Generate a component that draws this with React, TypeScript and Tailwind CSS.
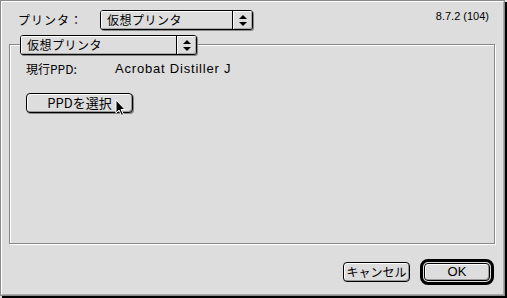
import React from "react";

const font = { fontFamily: '"Noto Sans CJK JP", "Liberation Sans", sans-serif' };

function Arrows() {
  return (
    <svg width="8" height="11" viewBox="0 0 8 11" className="block">
      <polygon points="4,0 8,4 0,4" fill="#000" />
      <polygon points="0,7 8,7 4,11" fill="#000" />
    </svg>
  );
}

function Popup({ w, label }: { w: string; label: string }) {
  return (
    <div
      className={`${w} h-[20px] flex bg-[#dddddd] border border-black rounded-[3px] shadow-[1px_1px_0_#888]`}
    >
      <div className="flex-1 flex items-center pl-[5px] border-t border-l border-white border-b border-b-[#aaa] rounded-l-[2px] text-[12px] leading-none text-black tracking-[0.5px]">
        {label}
      </div>
      <div className="w-[20px] flex items-center justify-center border-l border-black shadow-[inset_1px_1px_0_#fff,inset_-1px_-1px_0_#aaa] rounded-r-[2px]">
        <Arrows />
      </div>
    </div>
  );
}

function Cursor() {
  return (
    <svg width="12" height="18" viewBox="0 0 12 18" className="absolute left-[89px] top-[6px]">
      <path
        d="M1 1 L1 14 L4 11 L6.5 16.5 L8.5 15.5 L6 10.5 L10 10.5 Z"
        fill="#000"
        stroke="#fff"
        strokeWidth="1"
      />
    </svg>
  );
}

export default function App() {
  return (
    <div className="w-[507px] h-[298px] bg-[#dddddd]" style={font}>
      <div className="w-[505px] h-[296px] border border-[#8a8a8a] bg-[#dddddd] shadow-[2px_2px_0_#000]">
        <div className="h-full flex flex-col border-t border-l border-white border-r border-b border-r-[#aaaaaa] border-b-[#aaaaaa]">
          {/* header */}
          <div className="flex items-start mt-[8px] h-[20px]">
            <div className="ml-[16px] w-[82px] h-[20px] flex items-center text-[12px] text-black tracking-[1px]">
              プリンタ：
            </div>
            <Popup w="w-[153px]" label="仮想プリンタ" />
            <div className="ml-auto mr-[14px] -mt-[1px] text-[11px] leading-none pt-[2px] text-black" style={{ fontFamily: '"Liberation Sans", sans-serif' }}>
              8.7.2 (104)
            </div>
          </div>

          {/* group box */}
          <div className="relative ml-[7px] mt-[14px] w-[486px] h-[200px] border border-[#888] shadow-[1px_1px_0_#fff,inset_1px_1px_0_#fff]">
            <div className="absolute left-[10px] -top-[10px]">
              <Popup w="w-[177px]" label="仮想プリンタ" />
            </div>
            <div className="mt-[16px] ml-[16px] flex items-center h-[16px] text-[12px] text-black">
              <span className="w-[89px]">現行PPD:</span>
              <span className="tracking-[0.8px]" style={{ fontFamily: '"Liberation Sans", sans-serif', fontSize: "13px" }}>
                Acrobat Distiller J
              </span>
            </div>
            <div className="relative ml-[16px] mt-[16px]">
              <div className="w-[107px] h-[20px] flex items-center justify-center border border-black rounded-[4px] bg-[#dddddd] shadow-[inset_1px_1px_0_#fff,inset_-1px_-1px_0_#999,1px_1px_0_#888] text-[13px] text-black">
                PPDを選択
              </div>
              <Cursor />
            </div>
          </div>

          {/* footer */}
          <div className="mt-auto mb-[9px] mr-[9px] flex justify-end items-center gap-[10px]">
            <div className="w-[67px] h-[20px] flex items-center justify-center border border-black rounded-[4px] bg-[#dddddd] shadow-[inset_1px_1px_0_#fff,inset_-1px_-1px_0_#999] text-[12px] text-black">
              キャンセル
            </div>
            <div className="w-[74px] h-[26px] border-[3px] border-black rounded-[8px] p-[1px] bg-[#dddddd]">
              <div className="h-full flex items-center justify-center border border-black rounded-[4px] shadow-[inset_1px_1px_0_#fff,inset_-1px_-1px_0_#999] text-[13px] text-black" style={{ fontFamily: '"Liberation Sans", sans-serif' }}>
                OK
              </div>
            </div>
          </div>
        </div>
      </div>
    </div>
  );
}
